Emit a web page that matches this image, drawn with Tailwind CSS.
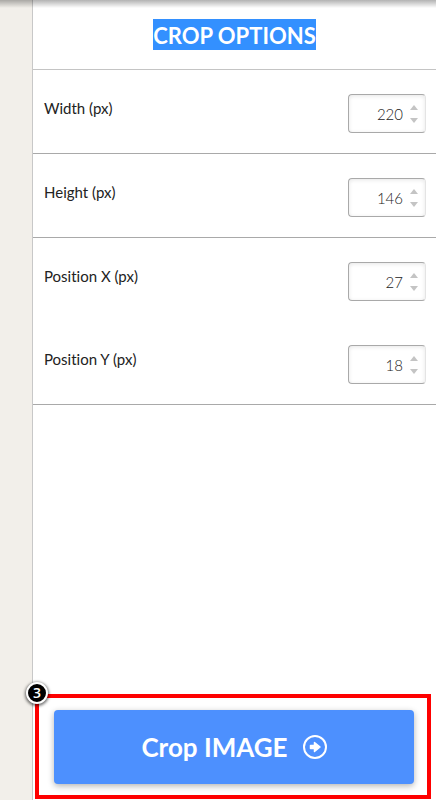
<!DOCTYPE html>
<html lang="en">
  <head>
    <meta charset="UTF-8" />
    <meta name="viewport" content="width=device-width, initial-scale=1.0" />
    <script src="https://cdn.jsdelivr.net/npm/@tailwindcss/browser@4"></script>
    <title>Crop options</title>
  </head>
  <body class="min-h-screen flex bg-[#f2efea] font-['Lato',sans-serif] [font-variant-ligatures:none]">
    <div
      class="absolute inset-x-0 top-0 h-2 bg-linear-to-b from-black/30 to-transparent pointer-events-none"
    ></div>
    <aside
      class="flex-1 min-w-0 ml-8 flex flex-col bg-white border-l border-[#c8c8c8]"
    >
      <header
        class="h-[70px] flex items-center justify-center border-b border-[#c4c4c4]"
      >
        <h1 class="h-[31px] bg-[#3390ff] text-white text-[22px] leading-[33px] font-bold">
          CROP OPTIONS
        </h1>
      </header>
      <form id="options">
        <div class="flex items-start justify-between pt-6 pb-5 pl-[11px] pr-2.5 border-b border-[#a9a9a9]">
          <label for="width" class="pt-1 text-[15px] leading-5 text-[#222]">Width (px)</label>
          <div class="w-[78px] h-[39px] flex items-center rounded border border-[#a9a9a9] border-r-[#e4e4e4] shadow-[inset_0_1px_4px_rgba(0,0,0,0.1)]">
            <input id="width" type="number" value="220" class="flex-1 min-w-0 pt-0.5 text-right text-[15px] font-light text-[#222] outline-none appearance-none [-moz-appearance:textfield] [&::-webkit-inner-spin-button]:appearance-none" />
            <div class="flex flex-col gap-2 px-[7px]">
              <button type="button" data-step="1" aria-label="Increase width"><svg class="w-2 h-[5px] block" viewBox="0 0 8 5"><path d="M4 0L8 5H0z" fill="#c4c4c4" /></svg></button>
              <button type="button" data-step="-1" aria-label="Decrease width"><svg class="w-2 h-[5px] block" viewBox="0 0 8 5"><path d="M0 0H8L4 5z" fill="#c4c4c4" /></svg></button>
            </div>
          </div>
        </div>
        <div class="flex items-start justify-between pt-6 pb-5 pl-[11px] pr-2.5 border-b border-[#a9a9a9]">
          <label for="height" class="pt-1 text-[15px] leading-5 text-[#222]">Height (px)</label>
          <div class="w-[78px] h-[39px] flex items-center rounded border border-[#a9a9a9] border-r-[#e4e4e4] shadow-[inset_0_1px_4px_rgba(0,0,0,0.1)]">
            <input id="height" type="number" value="146" class="flex-1 min-w-0 pt-0.5 text-right text-[15px] font-light text-[#222] outline-none appearance-none [-moz-appearance:textfield] [&::-webkit-inner-spin-button]:appearance-none" />
            <div class="flex flex-col gap-2 px-[7px]">
              <button type="button" data-step="1" aria-label="Increase height"><svg class="w-2 h-[5px] block" viewBox="0 0 8 5"><path d="M4 0L8 5H0z" fill="#c4c4c4" /></svg></button>
              <button type="button" data-step="-1" aria-label="Decrease height"><svg class="w-2 h-[5px] block" viewBox="0 0 8 5"><path d="M0 0H8L4 5z" fill="#c4c4c4" /></svg></button>
            </div>
          </div>
        </div>
        <div class="flex items-start justify-between pt-6 pb-5 pl-[11px] pr-2.5">
          <label for="x" class="pt-1 text-[15px] leading-5 text-[#222]">Position X (px)</label>
          <div class="w-[78px] h-[39px] flex items-center rounded border border-[#a9a9a9] border-r-[#e4e4e4] shadow-[inset_0_1px_4px_rgba(0,0,0,0.1)]">
            <input id="x" type="number" value="27" class="flex-1 min-w-0 pt-0.5 text-right text-[15px] font-light text-[#222] outline-none appearance-none [-moz-appearance:textfield] [&::-webkit-inner-spin-button]:appearance-none" />
            <div class="flex flex-col gap-2 px-[7px]">
              <button type="button" data-step="1" aria-label="Increase position X"><svg class="w-2 h-[5px] block" viewBox="0 0 8 5"><path d="M4 0L8 5H0z" fill="#c4c4c4" /></svg></button>
              <button type="button" data-step="-1" aria-label="Decrease position X"><svg class="w-2 h-[5px] block" viewBox="0 0 8 5"><path d="M0 0H8L4 5z" fill="#c4c4c4" /></svg></button>
            </div>
          </div>
        </div>
        <div class="flex items-start justify-between pt-6 pb-5 pl-[11px] pr-2.5 border-b border-[#a9a9a9]">
          <label for="y" class="pt-1 text-[15px] leading-5 text-[#222]">Position Y (px)</label>
          <div class="w-[78px] h-[39px] flex items-center rounded border border-[#a9a9a9] border-r-[#e4e4e4] shadow-[inset_0_1px_4px_rgba(0,0,0,0.1)]">
            <input id="y" type="number" value="18" class="flex-1 min-w-0 pt-0.5 text-right text-[15px] font-light text-[#222] outline-none appearance-none [-moz-appearance:textfield] [&::-webkit-inner-spin-button]:appearance-none" />
            <div class="flex flex-col gap-2 px-[7px]">
              <button type="button" data-step="1" aria-label="Increase position Y"><svg class="w-2 h-[5px] block" viewBox="0 0 8 5"><path d="M4 0L8 5H0z" fill="#c4c4c4" /></svg></button>
              <button type="button" data-step="-1" aria-label="Decrease position Y"><svg class="w-2 h-[5px] block" viewBox="0 0 8 5"><path d="M0 0H8L4 5z" fill="#c4c4c4" /></svg></button>
            </div>
          </div>
        </div>
      </form>
      <div class="relative mt-auto ml-0.5 mr-[5px] mb-px border-4 border-[#fe0000] pt-3 pb-[11px] pl-[15px] pr-[13px]">
        <span
          class="absolute -top-4 -left-[13px] w-[22px] h-[22px] flex items-center justify-center rounded-full border-2 border-white bg-black text-white text-sm leading-none font-semibold font-['Open_Sans',sans-serif] shadow-[0_1px_3px_1px_rgba(0,0,0,0.55)]"
          >3</span
        >
        <button
          type="submit"
          form="options"
          class="w-full h-[74px] flex items-center justify-center gap-[15px] rounded bg-[#4d90fe] text-white text-[26px] font-bold shadow-[0_2px_6px_rgba(0,0,0,0.3)]"
        >
          Crop IMAGE
          <svg class="w-6 h-6" viewBox="0 0 24 24" fill="none">
            <circle cx="12" cy="12" r="11" stroke="#fff" stroke-width="2" />
            <path d="M7.5 10.5H11.5V7.5L17 12L11.5 16.5V13.5H7.5z" fill="#fff" stroke="#fff" stroke-width="1.5" stroke-linejoin="round" />
          </svg>
        </button>
      </div>
    </aside>
    <script>
      const options = document.getElementById("options");

      options.addEventListener("click", (e) => {
        const button = e.target.closest("button[data-step]");
        if (!button) return;
        const input = button.parentElement.previousElementSibling;
        input.value = Math.max(0, Number(input.value) + Number(button.dataset.step));
      });

      options.addEventListener("submit", (e) => e.preventDefault());
    </script>
  </body>
</html>
